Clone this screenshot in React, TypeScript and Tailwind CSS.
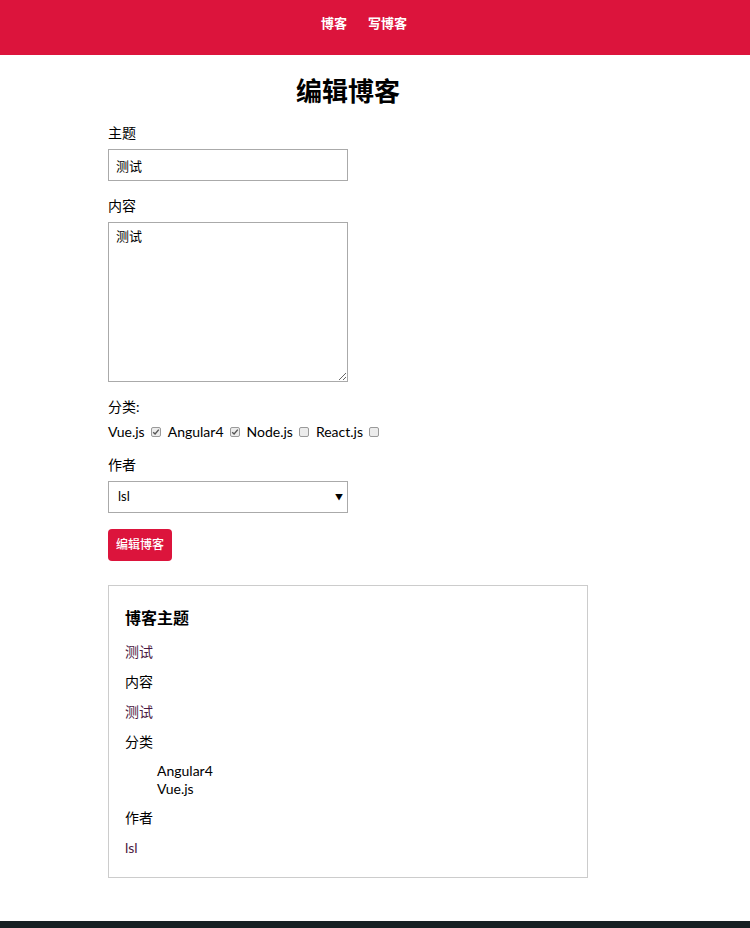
import React from 'react';

const categories = [
    { name: 'Vue.js', checked: true },
    { name: 'Angular4', checked: true },
    { name: 'Node.js', checked: false },
    { name: 'React.js', checked: false },
];

const Box: React.FC<{ checked: boolean }> = ({ checked }) => (
    <span className="inline-flex items-center justify-center w-[10px] h-[10px] border border-[#9a9a9a] bg-[#ececec] rounded-[2px] ml-[6px] mr-[7px]">
        {checked && (
            <svg width="8" height="8" viewBox="0 0 8 8">
                <path d="M1.2 4.2 L3.1 6 L6.8 1.6" fill="none" stroke="#555" strokeWidth="1.4" />
            </svg>
        )}
    </span>
);

const App: React.FC = () => {
    const font = { fontFamily: 'Lato, "Noto Sans CJK SC", sans-serif' };
    return (
        <div className="min-h-[928px] bg-white text-black flex flex-col" style={font}>
            <nav className="h-[55px] bg-[#dc143c] flex justify-center items-start pt-[14px] pr-[22px] gap-[21px] text-[13px] font-bold text-white">
                <a className="leading-[18px]">博客</a>
                <a className="leading-[18px]">写博客</a>
            </nav>

            <div className="w-[480px] ml-[108px] flex flex-col">
                <h2 className="text-[26px] font-bold leading-[32px] text-center mt-[20px]">编辑博客</h2>

                <label className="text-[14px] leading-[20px] mt-[16px] mb-[6px]">主题</label>
                <input
                    defaultValue="测试"
                    className="w-[240px] h-[32px] border border-[#aaa] px-[7px] text-[13px] outline-none"
                />

                <label className="text-[14px] leading-[20px] mt-[15px] mb-[6px]">内容</label>
                <textarea
                    defaultValue="测试"
                    className="w-[240px] h-[160px] border border-[#aaa] px-[7px] py-[4px] text-[13px] outline-none"
                />

                <label className="text-[14px] leading-[20px] mt-[15px]">分类:</label>
                <div className="flex items-center text-[14px] leading-[20px] mt-[5px]">
                    {categories.map((c) => (
                        <span key={c.name} className="flex items-center">
                            {c.name}
                            <Box checked={c.checked} />
                        </span>
                    ))}
                </div>

                <label className="text-[14px] leading-[20px] mt-[13px] mb-[6px]">作者</label>
                <div className="relative w-[240px]">
                    <select className="appearance-none w-[240px] h-[32px] border border-[#aaa] pl-[9px] text-[13px] bg-white outline-none">
                        <option>lsl</option>
                    </select>
                    <span className="absolute right-[5px] top-[10px] text-[8px] pointer-events-none">▼</span>
                </div>

                <div className="mt-[16px]">
                    <button className="h-[32px] px-[8px] bg-[#dc143c] text-white text-[12px] font-medium rounded-[4px]">编辑博客</button>
                </div>

                <div className="mt-[24px] border border-[#ccc] px-[16px] pt-[16px] pb-[19px] text-[14px]">
                    <h3 className="text-[16px] font-bold leading-[32px]">博客主题</h3>
                    <p className="leading-[20px] mt-[8px] text-[#4a1942]">测试</p>
                    <p className="leading-[20px] mt-[10px]">内容</p>
                    <p className="leading-[20px] mt-[10px] text-[#4a1942]">测试</p>
                    <p className="leading-[20px] mt-[10px]">分类</p>
                    <ul className="pl-[32px] mt-[10px] leading-[18px]">
                        <li>Angular4</li>
                        <li>Vue.js</li>
                    </ul>
                    <p className="leading-[20px] mt-[10px]">作者</p>
                    <p className="leading-[20px] mt-[10px] text-[#4a1942]">lsl</p>
                </div>
            </div>

            <footer className="mt-[43px] h-[60px] bg-[#172023]" />
        </div>
    );
};

export default App;
